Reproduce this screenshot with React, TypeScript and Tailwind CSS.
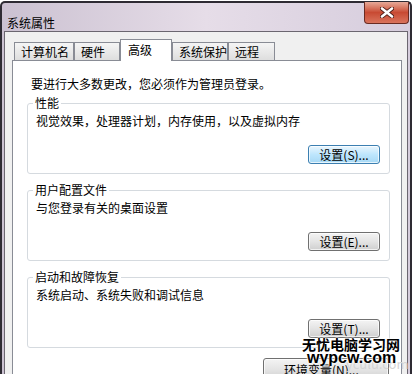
import React from "react";

const FONT = '"Noto Sans CJK SC", "Liberation Sans", sans-serif';

function WinButton({
  label,
  focused = false,
  className = "",
}: {
  label: string;
  focused?: boolean;
  className?: string;
}) {
  return (
    <button
      type="button"
      className={
        "h-[19px] rounded-[3px] border text-[12px] leading-none text-black shadow-[inset_0_0_0_1px_rgba(255,255,255,0.7)] " +
        (focused
          ? "border-[#3c7fb1] bg-linear-to-b from-[#eaf6fd] via-[#bee6fd] to-[#a7d9f5] "
          : "border-[#707070] bg-linear-to-b from-[#f4f4f4] via-[#e4e4e4] to-[#cfcfcf] ") +
        className
      }
    >
      {label}
    </button>
  );
}

function GroupBox({
  title,
  text,
  button,
  focused,
  className = "",
}: {
  title: string;
  text: string;
  button: string;
  focused?: boolean;
  className?: string;
}) {
  return (
    <fieldset
      className={
        "ml-[14px] w-[363px] rounded-[3px] border border-[#d5dadf] pl-[5px] pr-[9px] pb-[9px] " +
        className
      }
    >
      <legend className="px-[2px] text-[12px] leading-[16px] text-black">{title}</legend>
      <p className="mt-[2px] ml-[3px] text-[12px] leading-[16px] text-black">{text}</p>
      <div className="flex justify-end mt-[16px]">
        <WinButton label={button} focused={focused} className="w-[72px]" />
      </div>
    </fieldset>
  );
}

export default function App() {
  const tabs = [
    { name: "计算机名", w: "w-[60px]" },
    { name: "硬件", w: "w-[46px]" },
    { name: "高级", w: "w-[52px]", active: true },
    { name: "系统保护", w: "w-[56px]" },
    { name: "远程", w: "w-[47px]" },
  ];

  return (
    <div
      className="relative w-[412px] h-[374px] overflow-hidden bg-white"
      style={{ fontFamily: FONT }}
    >
      {/* 窗口外框 */}
      <div className="mt-[1px] h-[373px] flex flex-col rounded-t-[5px] border-x-2 border-t-2 border-[#2e2b33] bg-linear-to-r from-[#cbc1d1] via-[#e6dde8] to-[#d6cddd]">
        {/* 标题栏 */}
        <div className="h-[30px] flex justify-between">
          <span className="pl-[5px] pt-[12px] text-[12px] leading-[16px] text-black">
            系统属性
          </span>
          <div className="mr-[1px] -mt-[1px] w-[45px] h-[22px] rounded-b-[4px] border border-t-0 border-[#6a2b22] bg-linear-to-b from-[#e6a998] via-[#c84a33] to-[#d9735c] flex items-center justify-center">
            <svg width="14" height="11" viewBox="0 0 14 11">
              <path d="M2 1.5 L12 9.5 M12 1.5 L2 9.5" stroke="#4a1a14" strokeWidth="4.2" strokeLinecap="round" />
              <path d="M2 1.5 L12 9.5 M12 1.5 L2 9.5" stroke="#ffffff" strokeWidth="2.6" strokeLinecap="round" />
            </svg>
          </div>
        </div>

        {/* 客户区 */}
        <div className="flex-1 mx-[2px] border-x border-t border-[#6b6670] bg-[#f0f0f0] pt-[7px] pl-[7px] pr-[5px] flex flex-col">
          {/* 选项卡 */}
          <div className="h-[21px] flex items-end pl-[2px]">
            {tabs.map((t) =>
              t.active ? (
                <div
                  key={t.name}
                  className={`${t.w} h-[22px] -mb-px relative z-10 bg-white border border-b-0 border-[#898c95] pl-[7px] pt-[2px] text-[12px] leading-[16px] text-black`}
                >
                  {t.name}
                </div>
              ) : (
                <div
                  key={t.name}
                  className={`${t.w} h-[18px] border border-b-0 border-[#898c95] bg-linear-to-b from-[#f5f5f5] to-[#dedede] pl-[6px] pt-[2px] text-[12px] leading-[14px] text-black`}
                >
                  {t.name}
                </div>
              )
            )}
          </div>

          {/* 高级 面板 */}
          <div className="flex-1 bg-white border border-b-0 border-[#898c95] pt-[15px]">
            <p className="pl-[18px] text-[12px] leading-[16px] text-black">
              要进行大多数更改，您必须作为管理员登录。
            </p>
            <GroupBox
              className="mt-[3px]"
              title="性能"
              text="视觉效果，处理器计划，内存使用，以及虚拟内存"
              button="设置(S)..."
              focused
            />
            <GroupBox
              className="mt-[8px]"
              title="用户配置文件"
              text="与您登录有关的桌面设置"
              button="设置(E)..."
            />
            <GroupBox
              className="mt-[8px]"
              title="启动和故障恢复"
              text="系统启动、系统失败和调试信息"
              button="设置(T)..."
            />
            <div className="flex ml-[250px] mt-[10px]">
              <WinButton label="环境变量(N)..." className="w-[126px] h-[23px] text-left pl-[20px]" />
            </div>
          </div>
        </div>
      </div>

      {/* 水印 */}
      <span className="absolute left-[346px] top-[356px] text-[13px] leading-[16px] text-[#d4d4d4]">
        yculu.com
      </span>
      <span className="absolute left-[302px] top-[336px] text-[14px] leading-[16px] font-bold text-black [text-shadow:0_0_2px_#fff,0_0_2px_#fff,0_0_2px_#fff]">
        无忧电脑学习网
      </span>
      <span
        className="absolute left-[307px] top-[349px] text-[16px] leading-[18px] font-bold text-black [text-shadow:0_0_2px_#fff,0_0_2px_#fff,0_0_2px_#fff]"
        style={{ fontFamily: '"Liberation Sans", sans-serif' }}
      >
        wypcw.com
      </span>
    </div>
  );
}
